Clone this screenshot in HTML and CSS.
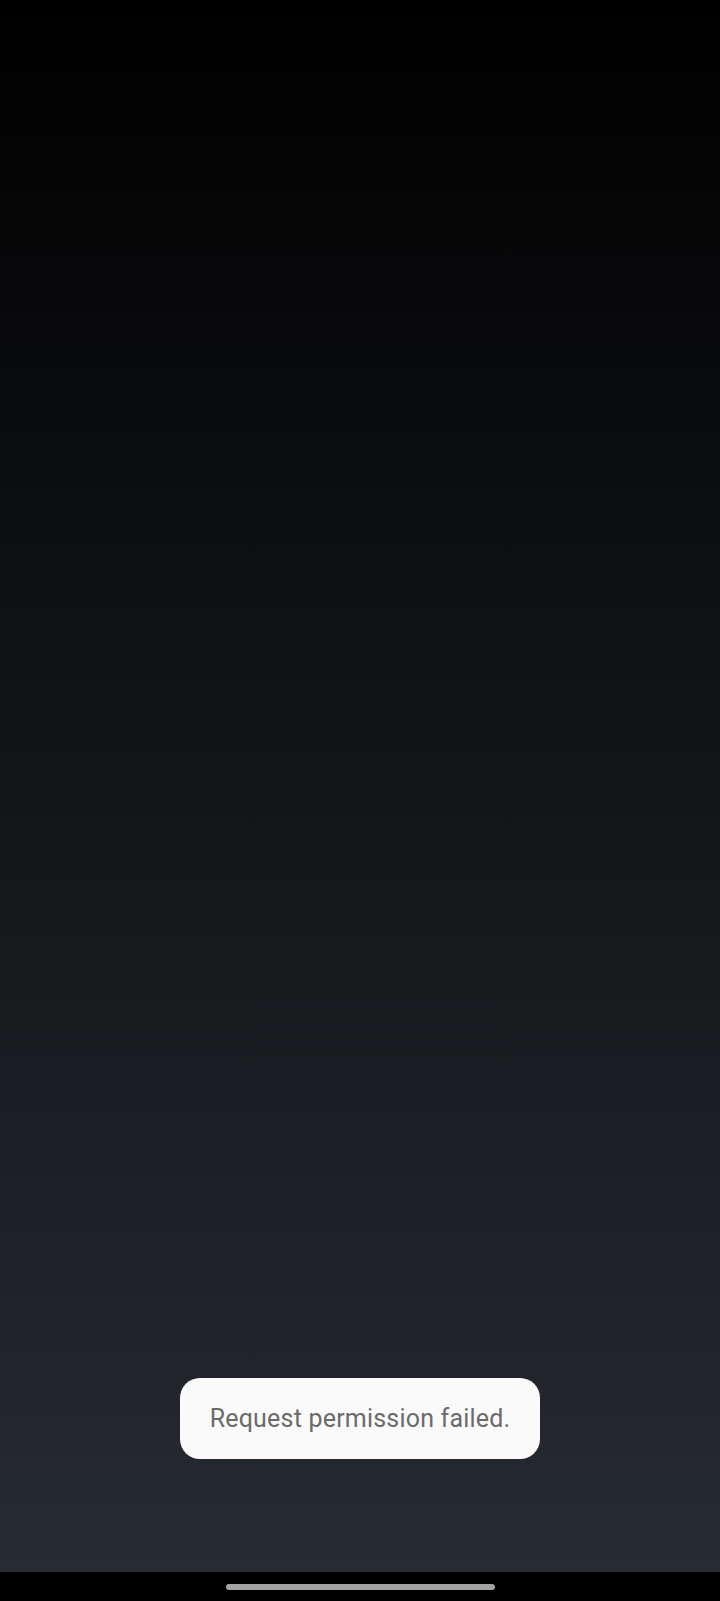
FILE: index.html
```html
<!DOCTYPE html>
<html lang="en">
<head>
<meta charset="utf-8">
<link rel="stylesheet" href="styles.css">
</head>
<body>
<div class="screen">
  <main class="content"></main>
  <div class="toast">Request permission failed.</div>
  <nav class="navbar"><div class="handle"></div></nav>
</div>
</body>
</html>
```
FILE: styles.css
```css
html, body {
  margin: 0;
  padding: 0;
  background: #000;
}
.screen {
  position: relative;
  width: 720px;
  height: 1601px;
  display: flex;
  flex-direction: column;
  font-family: Roboto, "Noto Sans", sans-serif;
}
.content {
  flex: 1;
  background: linear-gradient(to bottom, #000000 0px, #0a0b0d 400px, #131619 800px, #1d2024 1200px, #272b33 1572px);
}
.toast {
  position: absolute;
  left: 180px;
  top: 1378px;
  width: 360px;
  height: 81px;
  box-sizing: border-box;
  border-radius: 20px;
  background: #fafafa;
  color: #6b6b6b;
  font-size: 25px;
  letter-spacing: 0.2px;
  display: flex;
  align-items: center;
  justify-content: center;
}
.navbar {
  height: 29px;
  background: #000;
  display: flex;
  justify-content: center;
  padding-top: 12px;
  box-sizing: border-box;
}
.handle {
  width: 269px;
  height: 6px;
  border-radius: 3px;
  background: #a3a3a3;
}
```
